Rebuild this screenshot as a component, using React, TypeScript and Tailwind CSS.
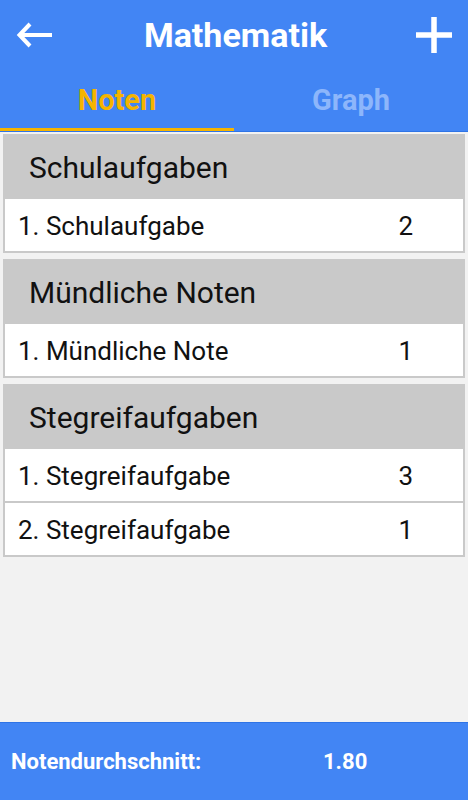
import React from "react";

type Grade = { name: string; value: string };
type Section = { title: string; grades: Grade[] };

const sections: Section[] = [
  { title: "Schulaufgaben", grades: [{ name: "1. Schulaufgabe", value: "2" }] },
  { title: "Mündliche Noten", grades: [{ name: "1. Mündliche Note", value: "1" }] },
  {
    title: "Stegreifaufgaben",
    grades: [
      { name: "1. Stegreifaufgabe", value: "3" },
      { name: "2. Stegreifaufgabe", value: "1" },
    ],
  },
];

function BackArrow() {
  return (
    <svg width="40" height="40" viewBox="0 0 40 40" fill="none">
      <path d="M3 20 H36" stroke="white" strokeWidth="4" />
      <path d="M14 9 L3.5 20 L14 31" stroke="white" strokeWidth="4" strokeLinejoin="miter" />
    </svg>
  );
}

function Plus() {
  return (
    <svg width="38" height="38" viewBox="0 0 38 38" fill="none">
      <path d="M19 1 V37 M1 19 H37" stroke="white" strokeWidth="5.5" />
    </svg>
  );
}

export default function App() {
  return (
    <div
      className="flex h-screen w-full flex-col bg-[#f2f2f2]"
      style={{ fontFamily: "Roboto, 'Noto Sans', sans-serif" }}
    >
      {/* header */}
      <div className="bg-[#4285f4]">
        <div className="flex h-[70px] items-center justify-between pl-[16px] pr-[15px]">
          <BackArrow />
          <h1 className="text-[34px] font-bold text-white">Mathematik</h1>
          <Plus />
        </div>
        <div className="flex h-[61px]">
          <div className="flex flex-1 flex-col">
            <div className="flex flex-1 items-center justify-center pt-[3px] text-[29px] font-bold text-[#f5b400]">
              Noten
            </div>
            <div className="h-[3px] bg-[#f5b400]" />
          </div>
          <div className="flex flex-1 flex-col">
            <div className="flex flex-1 items-center justify-center pt-[3px] text-[29px] font-bold text-[#8db6fb]">
              Graph
            </div>
            <div className="h-[3px]" />
          </div>
        </div>
        <div className="h-px bg-[#2f74e6]" />
      </div>

      {/* list */}
      <div className="flex flex-1 flex-col gap-[6px] px-[3px] pt-[2px]">
        {sections.map((s) => (
          <div key={s.title} className="flex flex-col gap-[2px] bg-[#c9c9c9] p-[2px] pt-0">
            <div className="flex h-[63px] items-center pl-[24px] pt-[3px] text-[30px] text-[#111]">
              {s.title}
            </div>
            {s.grades.map((g) => (
              <div
                key={g.name}
                className="flex h-[52px] items-center justify-between bg-white pl-[13px] pr-[50px] pt-[3px] text-[26px] text-[#111]"
              >
                <span>{g.name}</span>
                <span>{g.value}</span>
              </div>
            ))}
          </div>
        ))}
      </div>

      {/* footer */}
      <div className="h-px bg-[#2f74e6]" />
      <div className="flex h-[77px] items-center bg-[#4285f4] pl-[11px] text-[22px] font-bold text-white">
        <span className="w-[312px]">Notendurchschnitt:</span>
        <span>1.80</span>
      </div>
    </div>
  );
}
